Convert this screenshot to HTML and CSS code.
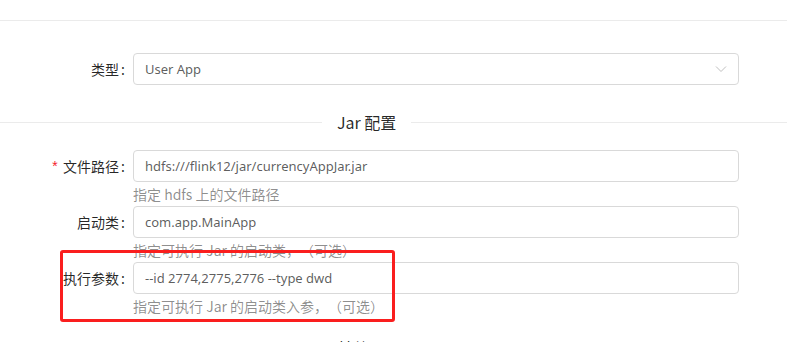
FILE: index.html
```html
<!DOCTYPE html>
<html lang="zh-CN">
<head>
<meta charset="UTF-8" />
<title>作业配置</title>
<link rel="stylesheet" href="styles.css">
</head>
<body>
<div class="card">
	<div class="card-head"></div>

	<div class="form">
		<div class="form-item">
			<div class="form-label">类型<span class="colon">:</span></div>
			<div class="form-control">
				<div class="select">
					<span class="select-value">User App</span>
					<svg class="select-arrow" width="12" height="12" viewBox="0 0 12 12">
						<path d="M1 3.5 L6 8.5 L11 3.5" fill="none" stroke="#bfbfbf" stroke-width="1"/>
					</svg>
				</div>
			</div>
		</div>

		<div class="divider">
			<span class="divider-line divider-left"></span>
			<span class="divider-text">Jar 配置</span>
			<span class="divider-line"></span>
		</div>

		<div class="form-item has-help">
			<div class="form-label"><span class="required">*</span>文件路径<span class="colon">:</span></div>
			<div class="form-control">
				<input class="input" type="text" value="hdfs:///flink12/jar/currencyAppJar.jar" />
				<div class="help">指定 hdfs 上的文件路径</div>
			</div>
		</div>

		<div class="form-item has-help">
			<div class="form-label">启动类<span class="colon">:</span></div>
			<div class="form-control">
				<input class="input" type="text" value="com.app.MainApp" />
				<div class="help">指定可执行 Jar 的启动类，（可选）</div>
			</div>
		</div>

		<div class="form-item has-help marked">
			<div class="form-label">执行参数<span class="colon">:</span></div>
			<div class="form-control">
				<input class="input" type="text" value="--id 2774,2775,2776 --type dwd" />
				<div class="help">指定可执行 Jar 的启动类入参，（可选）</div>
			</div>
			<div class="mark-box"></div>
		</div>

		<div class="divider divider-next">
			<span class="divider-line divider-left"></span>
			<span class="divider-text">其他配置</span>
			<span class="divider-line"></span>
		</div>
	</div>
</div>
</body>
</html>
```

FILE: styles.css
```css
* {
	margin: 0;
	padding: 0;
	box-sizing: border-box;
}

body {
	width: 787px;
	height: 342px;
	overflow: hidden;
	background: #fff;
	font: 14px "Noto Sans CJK SC", "Liberation Sans", sans-serif;
	color: rgba(0, 0, 0, .85);
	text-spacing-trim: space-all;
}

.card-head {
	height: 21px;
	border-bottom: 1px solid #ebebeb;
}

.form {
	padding-top: 32px;
}

.form-item {
	display: flex;
	align-items: flex-start;
	margin-bottom: 25px;
}

.form-item.has-help {
	margin-bottom: 0;
}

.form-label {
	width: 133px;
	flex: none;
	height: 32px;
	line-height: 32px;
	text-align: right;
	white-space: nowrap;
	color: rgba(0, 0, 0, .85);
}

.colon {
	margin: 0 8px 0 2px;
}

.required {
	margin-right: 4px;
	color: #f5222d;
	font-family: SimSun, "Liberation Mono", monospace;
	font-size: 14px;
}

.form-control {
	width: 606px;
	flex: none;
}

.select,
.input {
	display: flex;
	align-items: center;
	width: 100%;
	height: 32px;
	padding: 0 11px;
	border: 1px solid #d9d9d9;
	border-radius: 4px;
	background: #fff;
	font: 13px "Noto Sans", "Noto Sans CJK SC", sans-serif;
	color: rgba(0, 0, 0, .65);
	outline: none;
}

.select-value {
	flex: 1;
}

.help {
	height: 24px;
	line-height: 24px;
	color: rgba(0, 0, 0, .45);
}

.divider {
	display: flex;
	align-items: center;
	height: 24px;
	margin-bottom: 16px;
}

.divider-next {
	margin-top: 18px;
}

.divider-line {
	flex: 1;
	border-top: 1px solid #ebebeb;
}

.divider-line.divider-left {
	flex: none;
	width: 322px;
}

.divider-text {
	padding: 0 15px;
	font-size: 16px;
	font-weight: 400;
	line-height: 24px;
	white-space: nowrap;
}

.marked {
	position: relative;
}

.mark-box {
	position: absolute;
	left: 60px;
	top: -12px;
	width: 335px;
	height: 72px;
	border: 3px solid #fa1e1e;
	border-radius: 3px;
}
```
